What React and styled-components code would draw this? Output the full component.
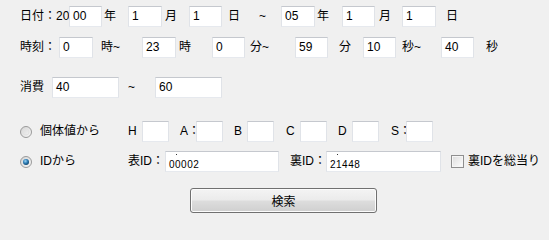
import React from 'react';
import styled, { createGlobalStyle } from 'styled-components';

const GlobalStyle = createGlobalStyle`
  html, body {
    margin: 0;
    padding: 0;
    background: #f0f0f0;
  }
  body {
    font-family: "Liberation Sans", "Noto Sans CJK JP", sans-serif;
    font-size: 12px;
    color: #000;
  }
`;

const Panel = styled.div`
  width: 549px;
  height: 223px;
  box-sizing: border-box;
  padding-top: 6px;
  background: #f0f0f0;
  overflow: hidden;
`;

const Row = styled.div`
  display: flex;
  align-items: center;
  height: 21px;
  padding-left: 20px;
  margin-top: ${({ $top }) => $top || 0}px;
`;

const Text = styled.span`
  flex: none;
  box-sizing: border-box;
  width: ${({ $w }) => ($w ? `${$w}px` : 'auto')};
  padding-left: ${({ $in }) => $in || 0}px;
  white-space: nowrap;
  line-height: 21px;
`;

const Field = styled.div`
  flex: none;
  position: relative;
  box-sizing: border-box;
  width: ${({ $w }) => $w}px;
  height: 21px;
  background: #fff;
  border: 1px solid;
  border-color: #c5c8ce #e0e3e8 #e6e9ee #e0e3e8;
  padding-left: 3px;
  display: flex;
  align-items: ${({ $small }) => ($small ? 'flex-end' : 'center')};
  font-size: ${({ $small }) => ($small ? 10 : 12)}px;
  line-height: ${({ $small }) => ($small ? '13px' : '19px')};
  letter-spacing: ${({ $small }) => ($small ? '0.5px' : '0')};

  ${({ $small }) =>
    $small &&
    `
    &::before {
      content: '';
      position: absolute;
      left: 10px;
      top: 2px;
      width: 1px;
      height: 1px;
      background: #333;
    }
  `}
`;

const RadioBox = styled.span`
  flex: none;
  width: 20px;
  height: 21px;
  display: flex;
  align-items: center;
`;

const CheckBox = styled.span`
  flex: none;
  box-sizing: border-box;
  width: 13px;
  height: 13px;
  margin-left: 10px;
  border: 1px solid #8f8f8f;
  background: linear-gradient(135deg, #dcdcdc 0%, #f4f4f4 70%, #ffffff 100%);
  box-shadow: inset 0 0 0 1px #f6f6f6;
`;

const ButtonRow = styled.div`
  display: flex;
  padding-left: 190px;
  margin-top: 16px;
`;

const SearchButton = styled.button`
  width: 187px;
  height: 25px;
  border: 1px solid #707070;
  border-radius: 3px;
  background: linear-gradient(#f4f4f4 0%, #ebebeb 48%, #dddddd 52%, #cfcfcf 100%);
  box-shadow: inset 0 0 0 1px #fcfcfc;
  font-family: "Liberation Sans", "Noto Sans CJK JP", sans-serif;
  font-size: 12px;
  color: #000;
  padding: 0;
`;

function Radio({ checked }) {
  return (
    <RadioBox>
      <svg width="12" height="12" viewBox="0 0 12 12">
        <defs>
          <linearGradient id={checked ? 'rg-on' : 'rg-off'} x1="0" y1="0" x2="1" y2="1">
            <stop offset="0" stopColor="#d4d4d4" />
            <stop offset="1" stopColor="#f8f8f8" />
          </linearGradient>
          <radialGradient id="dot" cx="0.4" cy="0.35" r="0.7">
            <stop offset="0" stopColor="#9fd6f4" />
            <stop offset="0.5" stopColor="#2f7fb8" />
            <stop offset="1" stopColor="#0d3f66" />
          </radialGradient>
        </defs>
        <circle cx="6" cy="6" r="5.5" fill={`url(#${checked ? 'rg-on' : 'rg-off'})`} stroke="#9a9a9a" strokeWidth="1" />
        {checked ? (
          <circle cx="6" cy="6" r="3" fill="url(#dot)" />
        ) : (
          <circle cx="6" cy="6" r="3" fill="none" stroke="#e2e2e2" strokeWidth="1" />
        )}
      </svg>
    </RadioBox>
  );
}

export default function App() {
  return (
    <Panel>
      <GlobalStyle />
      <Row>
        <Text $w={49}>日付：20</Text>
        <Field $w={33}>00</Field>
        <Text $w={26} $in={2}>年</Text>
        <Field $w={34}>1</Field>
        <Text $w={27} $in={3}>月</Text>
        <Field $w={33}>1</Field>
        <Text $w={37} $in={6}>日</Text>
        <Text $w={22}>~</Text>
        <Field $w={34}>05</Field>
        <Text $w={27} $in={2}>年</Text>
        <Field $w={33}>1</Field>
        <Text $w={27} $in={4}>月</Text>
        <Field $w={34}>1</Field>
        <Text $in={10}>日</Text>
      </Row>

      <Row $top={10}>
        <Text $w={39}>時刻：</Text>
        <Field $w={34}>0</Field>
        <Text $w={49} $in={8}>時~</Text>
        <Field $w={34}>23</Field>
        <Text $w={36} $in={3}>時</Text>
        <Field $w={33}>0</Field>
        <Text $w={50} $in={5}>分~</Text>
        <Field $w={33}>59</Field>
        <Text $w={35} $in={11}>分</Text>
        <Field $w={33}>10</Field>
        <Text $w={45} $in={6}>秒~</Text>
        <Field $w={33}>40</Field>
        <Text $in={12}>秒</Text>
      </Row>

      <Row $top={19}>
        <Text $w={32}>消費</Text>
        <Field $w={67}>40</Field>
        <Text $w={36} $in={9}>~</Text>
        <Field $w={67}>60</Field>
      </Row>

      <Row $top={23}>
        <Radio />
        <Text $w={88}>個体値から</Text>
        <Text $w={14}>H</Text>
        <Field $w={27} />
        <Text $w={27} $in={11}>A：</Text>
        <Field $w={27} />
        <Text $w={24} $in={11}>B</Text>
        <Field $w={27} />
        <Text $w={26} $in={12}>C</Text>
        <Field $w={27} />
        <Text $w={25} $in={11}>D</Text>
        <Field $w={27} />
        <Text $w={27} $in={12}>S：</Text>
        <Field $w={27} />
      </Row>

      <Row $top={9}>
        <Radio checked />
        <Text $w={88}>IDから</Text>
        <Text $w={37}>表ID：</Text>
        <Field $w={114} $small>00002</Field>
        <Text $w={47} $in={11}>裏ID：</Text>
        <Field $w={115} $small>21448</Field>
        <CheckBox />
        <Text $in={4}>裏IDを総当り</Text>
      </Row>

      <ButtonRow>
        <SearchButton>検索</SearchButton>
      </ButtonRow>
    </Panel>
  );
}
